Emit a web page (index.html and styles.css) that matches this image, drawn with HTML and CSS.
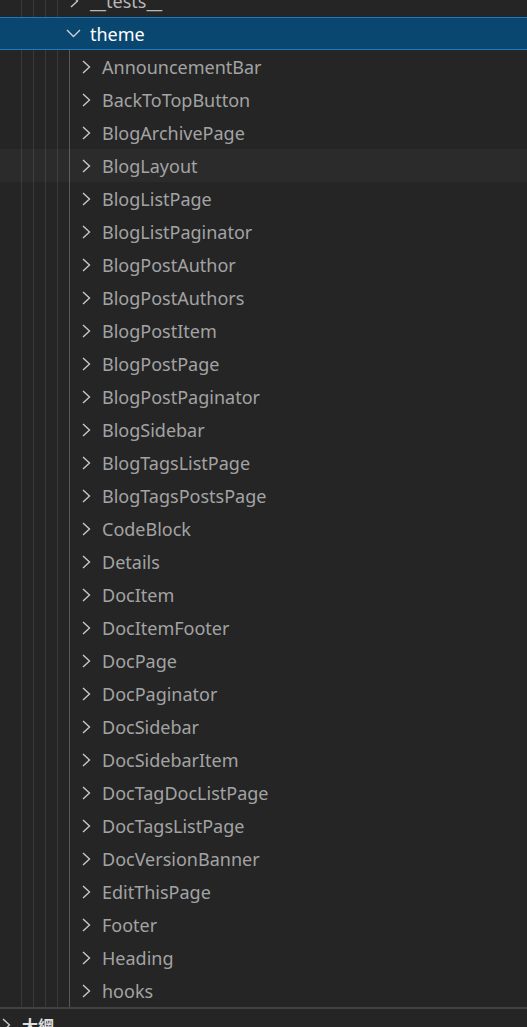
FILE: index.html
```html
<!DOCTYPE html>
<html>
<head>
<meta charset="utf-8">
<link rel="stylesheet" href="styles.css">
</head>
<body>
<div class="explorer">
  <div class="tree">
    <div class="row tests">
      <svg class="chev-right" width="9" height="14" viewBox="0 0 9 14"><path d="M1 1 L7.5 7 L1 13" fill="none" stroke="currentColor" stroke-width="1.4"/></svg>
      <span class="label">__tests__</span>
    </div>
    <div class="row theme">
      <svg class="chev-down" width="15" height="9" viewBox="0 0 15 9"><path d="M1 1 L7.5 7.5 L14 1" fill="none" stroke="currentColor" stroke-width="1.4"/></svg>
      <span class="label">theme</span>
    </div>
    <div class="children" id="children"></div>
  </div>
  <div class="panel">
    <svg class="chev-right" width="9" height="14" viewBox="0 0 9 14"><path d="M1 1 L7.5 7 L1 13" fill="none" stroke="currentColor" stroke-width="1.4"/></svg>
    <span class="panel-title">大綱</span>
  </div>
</div>
<script>
var names = ["AnnouncementBar","BackToTopButton","BlogArchivePage","BlogLayout","BlogListPage","BlogListPaginator","BlogPostAuthor","BlogPostAuthors","BlogPostItem","BlogPostPage","BlogPostPaginator","BlogSidebar","BlogTagsListPage","BlogTagsPostsPage","CodeBlock","Details","DocItem","DocItemFooter","DocPage","DocPaginator","DocSidebar","DocSidebarItem","DocTagDocListPage","DocTagsListPage","DocVersionBanner","EditThisPage","Footer","Heading","hooks"];
var c = document.getElementById('children');
names.forEach(function(n){
  var r = document.createElement('div');
  r.className = 'row child' + (n === 'BlogLayout' ? ' hover' : '');
  r.innerHTML = '<svg class="chev-right" width="9" height="14" viewBox="0 0 9 14"><path d="M1 1 L7.5 7 L1 13" fill="none" stroke="currentColor" stroke-width="1.4"/></svg><span class="label">' + n + '</span>';
  c.appendChild(r);
});
</script>
</body>
</html>
```
FILE: styles.css
```css
html, body {
  margin: 0;
  padding: 0;
  background: #252526;
  overflow: hidden;
}
.explorer {
  width: 527px;
  height: 1027px;
  overflow: hidden;
  font-family: "Noto Sans", "Open Sans", sans-serif;
  font-size: 18px;
}
.tree {
  height: 1007px;
  overflow: hidden;
  background-image:
    linear-gradient(#3a3a3a, #3a3a3a),
    linear-gradient(#3a3a3a, #3a3a3a),
    linear-gradient(#3a3a3a, #3a3a3a),
    linear-gradient(#3a3a3a, #3a3a3a);
  background-size: 1px 100%;
  background-repeat: no-repeat;
  background-position: 21px 0, 33px 0, 45px 0, 57px 0;
}
.row {
  height: 33px;
  display: flex;
  align-items: center;
  box-sizing: border-box;
  white-space: nowrap;
}
.tests {
  margin-top: -16px;
  padding-left: 70px;
  color: #cccccc;
}
.tests .label { margin-left: 11px; color: #b8b8b8; }
.theme {
  background: #094771;
  border-top: 1px solid #1a7bc4;
  border-bottom: 1px solid #1a7bc4;
  padding-left: 66px;
  color: #ffffff;
}
.theme .label { margin-left: 9px; color: #ffffff; }
.chev-down { color: #d0d0d0; flex: none; }
.chev-right { color: #c8c8c8; flex: none; }
.children {
  background-image: linear-gradient(#585858, #585858);
  background-size: 1px 100%;
  background-repeat: no-repeat;
  background-position: 69px 0;
}
.child {
  padding-left: 82px;
}
.child .label {
  margin-left: 11px;
  color: #a3a3a3;
}
.child.hover {
  background: rgba(255, 255, 255, 0.03);
}
.panel {
  border-top: 2px solid #414141;
  height: 33px;
  box-sizing: border-box;
  display: flex;
  align-items: center;
  padding-left: 2px;
  color: #cccccc;
}
.panel-title {
  margin-left: 11px;
  font-family: "Noto Sans CJK TC", "Noto Sans", sans-serif;
  font-weight: bold;
  font-size: 16px;
  color: #e0e0e0;
}
```
